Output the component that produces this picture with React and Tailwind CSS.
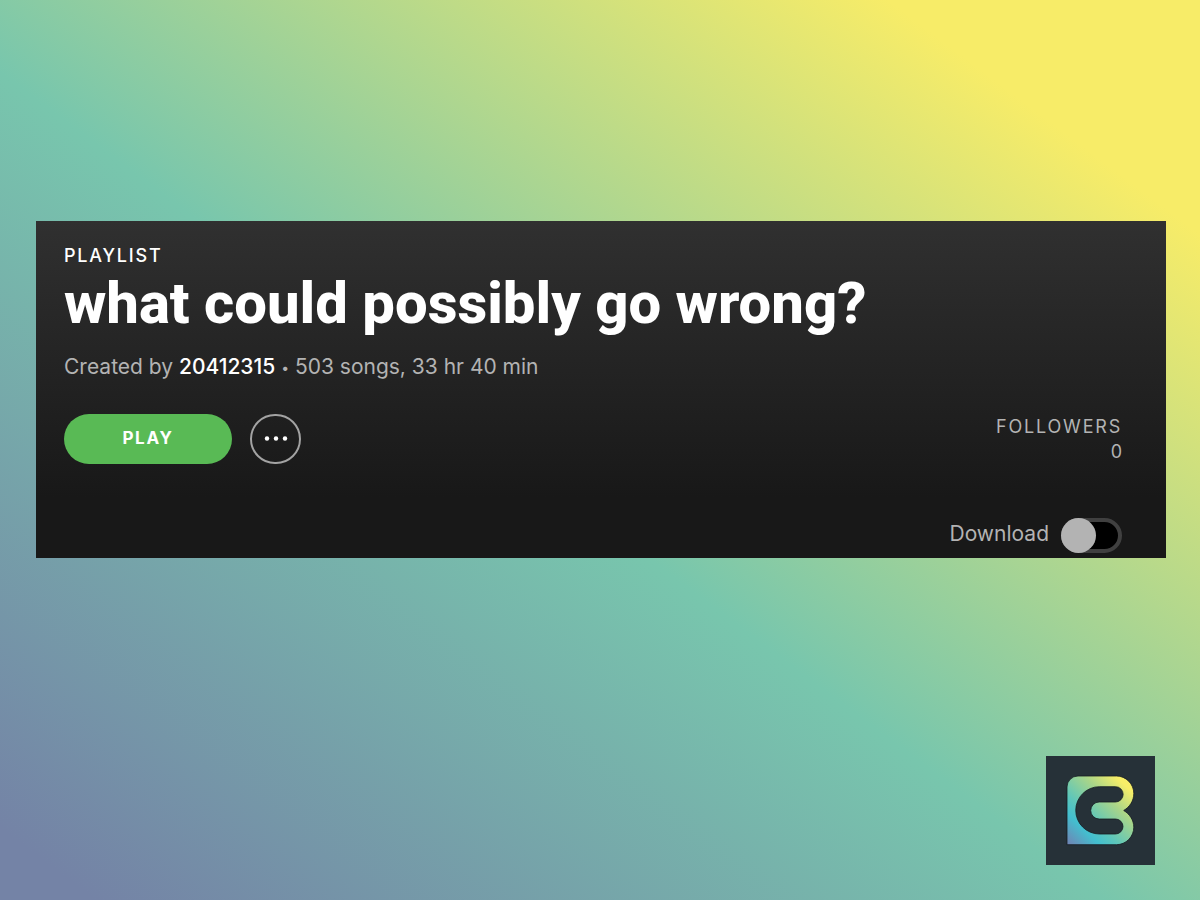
function BrandMark() {
  return (
    <svg viewBox="0 0 109 109" className="h-[109px] w-[109px]" role="img" aria-label="Brand logo">
      <defs>
        <linearGradient id="brand" gradientUnits="userSpaceOnUse" x1="22" y1="88" x2="82" y2="26">
          <stop offset="0" stopColor="#6f84b4" />
          <stop offset="0.25" stopColor="#43bfcf" />
          <stop offset="0.4" stopColor="#5cc6bb" />
          <stop offset="0.7" stopColor="#a9d589" />
          <stop offset="0.95" stopColor="#f7ee68" />
        </linearGradient>
      </defs>
      <rect width="109" height="109" fill="#263138" />
      <path
        fill="url(#brand)"
        stroke="#151c22"
        strokeWidth="0.8"
        fillRule="evenodd"
        d="M21 31A11 11 0 0 1 32 20H70.500A17.500 17.500 0 0 1 87.800 37.500C87.800 45 83.500 51 77.700 54.500C83.500 58 87.800 64 87.800 71.200A17.500 17.500 0 0 1 70.500 88.700H21Z
        M53.400 30.700A23.600 23.600 0 0 0 53.400 78H69.500A7.500 7.500 0 0 0 69.500 63H53.200A8.500 8.500 0 0 1 53.200 46H69.500A7.600 7.600 0 0 0 69.500 30.700Z"
      />
    </svg>
  );
}

function DotsIcon() {
  return (
    <svg viewBox="0 0 24 6" className="h-[6px] w-[24px]" fill="currentColor" aria-hidden="true">
      <circle cx="3" cy="2.500" r="2.200" />
      <circle cx="12" cy="2.500" r="2.200" />
      <circle cx="21" cy="2.500" r="2.200" />
    </svg>
  );
}

export default function App() {
  return (
    <main className="flex min-h-screen flex-col bg-[linear-gradient(to_top_right,#7483a6_4%,#78c6ad_46%,#f7ec68_87%)] pt-[221px] font-['Inter','Liberation_Sans',sans-serif]">
      <section className="mr-[34px] ml-9 bg-[linear-gradient(180deg,#303030_0%,#181818_82%)] pt-6 pr-[44px] pb-[5px] pl-7 text-[#b3b3b3]">
        <p className="text-[18px] leading-[22px] font-medium tracking-widest text-white">PLAYLIST</p>
        <h1 className="font-['Roboto',sans-serif] text-[58px] leading-[72px] font-extrabold text-white">what could possibly go wrong?</h1>
        <p className="mt-4 text-[21px] leading-6">
          Created by <a href="#creator" className="font-medium text-white">20412315</a>{" "}
          <span className="align-middle text-[14px] leading-none">•</span> 503 songs, 33 hr 40 min
        </p>
        <div className="mt-[35px] flex items-start justify-between">
          <div className="flex gap-[18px]">
            <button type="button" className="h-[50px] w-[168px] rounded-full bg-[#59ba55] text-[17px] font-bold tracking-widest text-white">
              PLAY
            </button>
            <button type="button" aria-label="More options" className="flex h-[50px] w-[51px] items-center justify-center rounded-full border-2 border-[#a3a3a3] text-white">
              <DotsIcon />
            </button>
          </div>
          <dl className="text-right text-[18px] leading-[25px]">
            <dt className="tracking-widest">FOLLOWERS</dt>
            <dd>0</dd>
          </dl>
        </div>
        <div className="mt-[54px] flex items-center justify-end gap-3">
          <label htmlFor="download" className="pb-1 text-[21px] leading-6">Download</label>
          <input
            id="download"
            type="checkbox"
            role="switch"
            className="relative h-[35px] w-[61px] appearance-none rounded-full border-4 border-[#404040] bg-black before:absolute before:-top-1 before:-left-1 before:h-[35px] before:w-[35px] before:rounded-full before:bg-[#b3b3b3]"
          />
        </div>
      </section>
      <footer className="mt-auto flex justify-end pr-[45px] pb-[35px]">
        <BrandMark />
      </footer>
    </main>
  );
}
